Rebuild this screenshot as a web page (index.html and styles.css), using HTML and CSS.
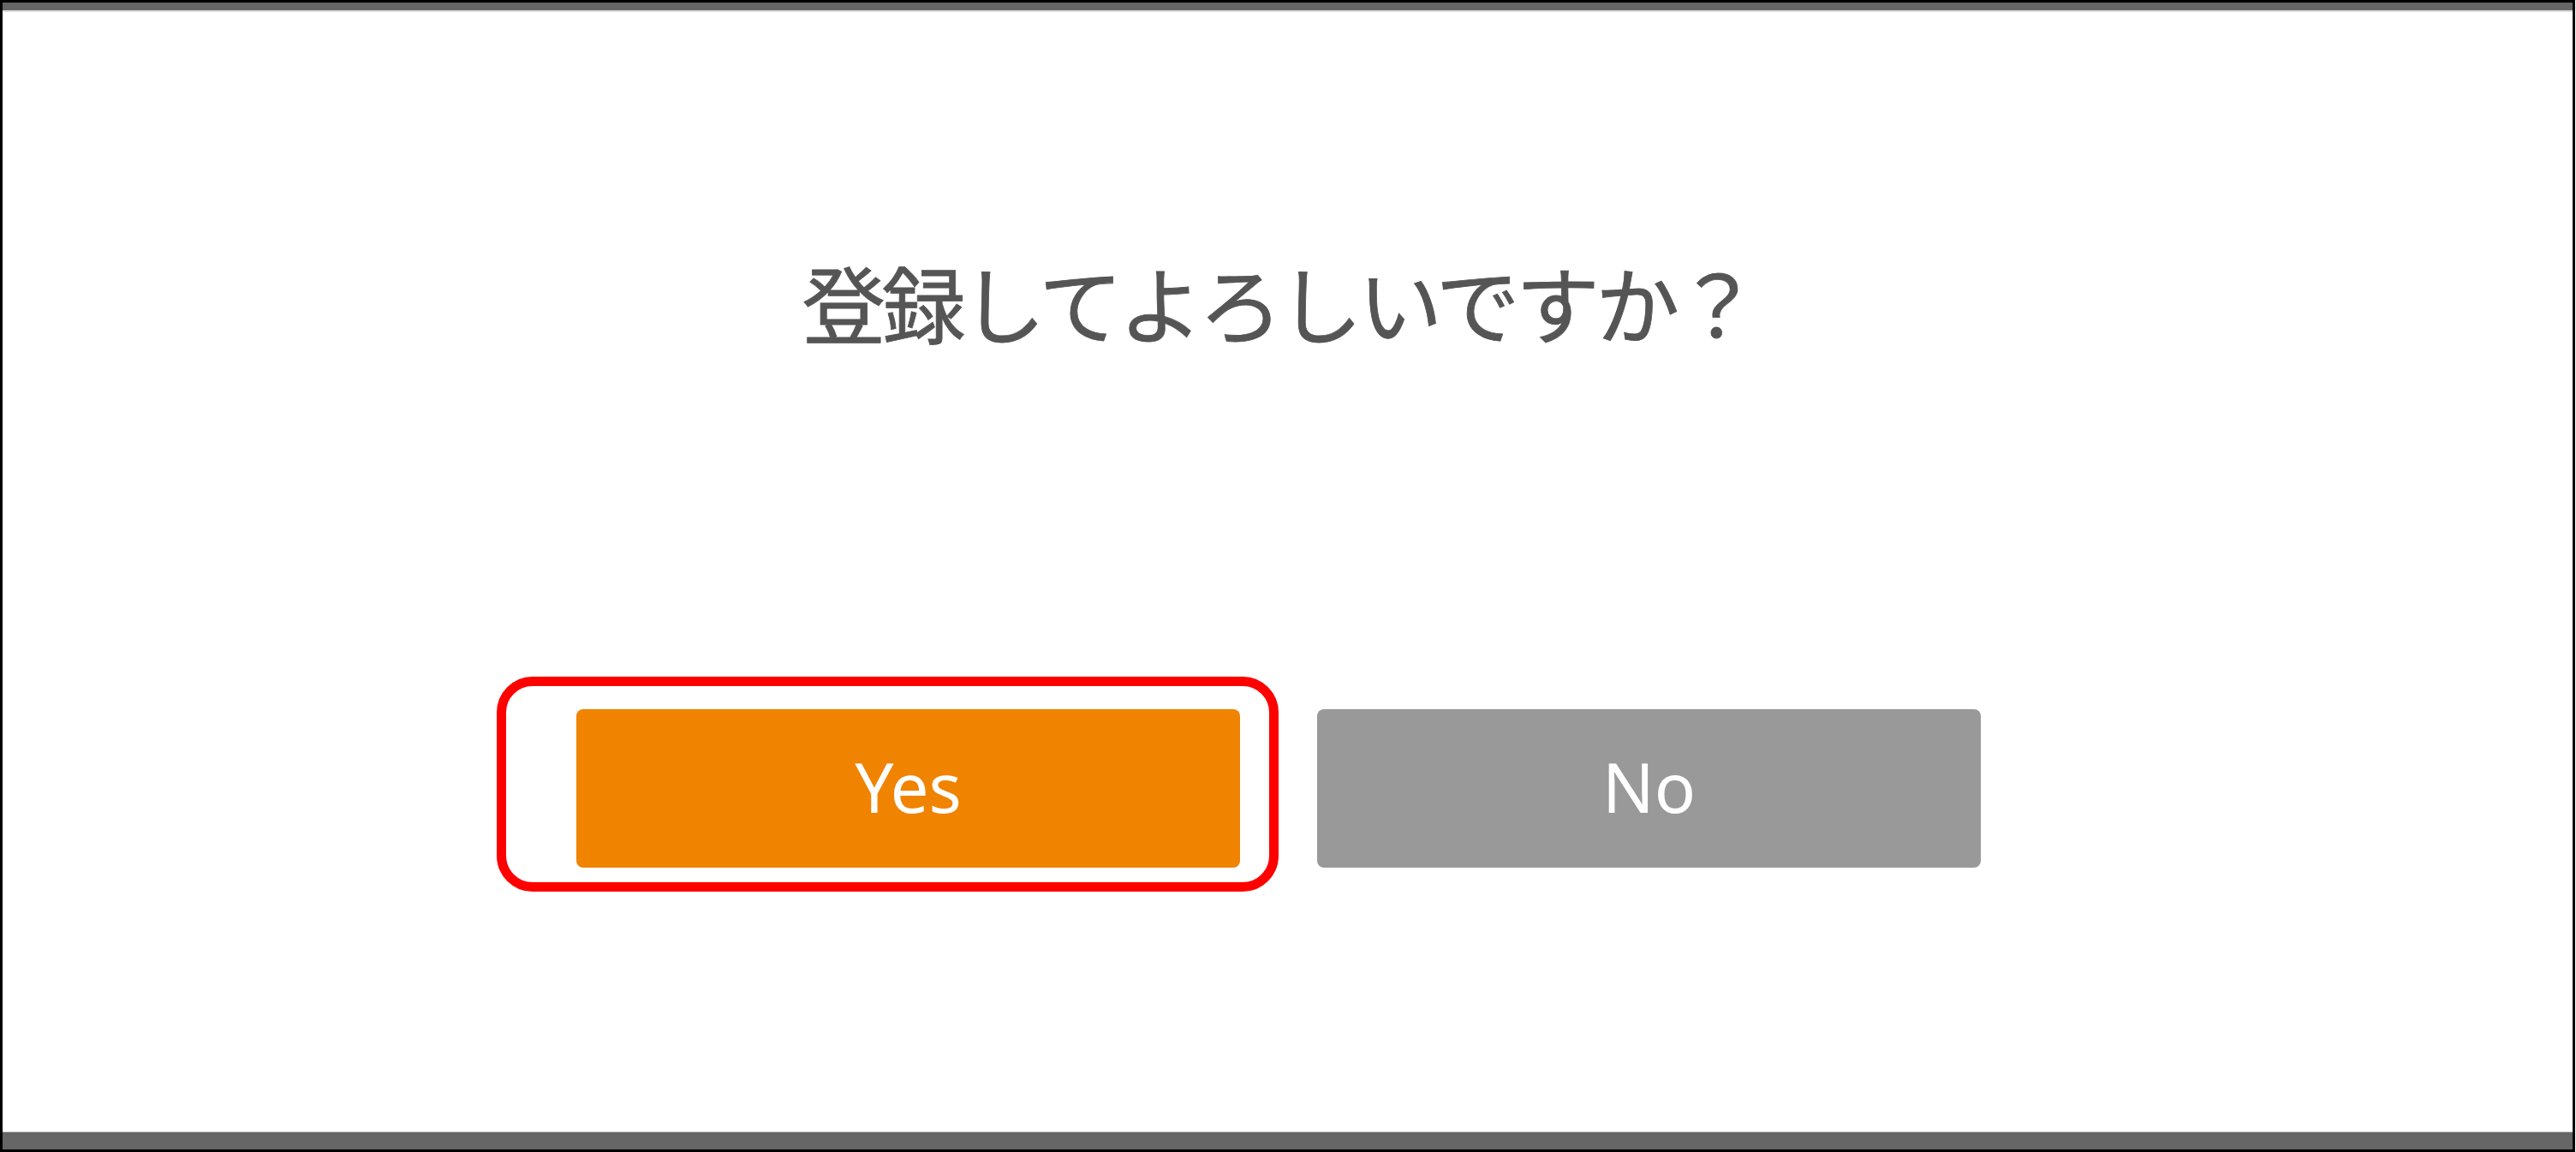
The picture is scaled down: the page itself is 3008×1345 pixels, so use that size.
FILE: index.html
```html
<!DOCTYPE html>
<html lang="ja">
<head>
<meta charset="utf-8">
<title>登録確認</title>
<link rel="stylesheet" href="styles.css">
</head>
<body>
<div class="frame">
  <div class="topbar"></div>
  <div class="content">
    <p class="question">登録してよろしいですか？</p>
    <div class="actions">
      <div class="highlight-wrap">
        <button class="btn btn-yes" type="button">Yes</button>
        <span class="highlight"></span>
      </div>
      <button class="btn btn-no" type="button">No</button>
    </div>
  </div>
  <div class="bottombar"></div>
</div>
</body>
</html>
```
FILE: styles.css
```css
html, body {
  margin: 0;
  padding: 0;
  background: #ffffff;
}

.frame {
  box-sizing: border-box;
  width: 3007px;
  height: 1345px;
  border: 3px solid #000000;
  display: flex;
  flex-direction: column;
  background: #ffffff;
}

.topbar {
  height: 9px;
  background: #666666;
  border-bottom: 2px solid #dddddd;
  flex: none;
}

.content {
  flex: 1;
  display: flex;
  flex-direction: column;
  align-items: center;
  padding: 288px 21px 0 0;
}

.question {
  margin: 0;
  font-family: "Noto Sans CJK JP", "Noto Sans", sans-serif;
  font-size: 98px;
  line-height: 98px;
  letter-spacing: -4.7px;
  font-weight: 400;
  color: #555555;
  white-space: nowrap;
  -webkit-text-stroke: 0.8px #555555;
}

.actions {
  display: flex;
  gap: 90px;
  margin-top: 428px;
}

.highlight-wrap {
  position: relative;
}

.btn {
  display: flex;
  align-items: center;
  justify-content: center;
  width: 775px;
  height: 185px;
  border: none;
  border-radius: 8px;
  padding: 0 0 6px 0;
  font-family: "Noto Sans", "Open Sans", sans-serif;
  font-size: 80px;
  font-weight: 400;
  color: #ffffff;
  cursor: pointer;
}

.btn-yes {
  background: #f08300;
}

.btn-no {
  background: #999999;
}

.highlight {
  position: absolute;
  left: -93px;
  top: -38px;
  right: -45px;
  bottom: -28px;
  border: 11px solid #ff0000;
  border-radius: 42px;
  pointer-events: none;
}

.bottombar {
  height: 20px;
  background: #666666;
  border-top: 1px solid #cccccc;
  flex: none;
}
```
